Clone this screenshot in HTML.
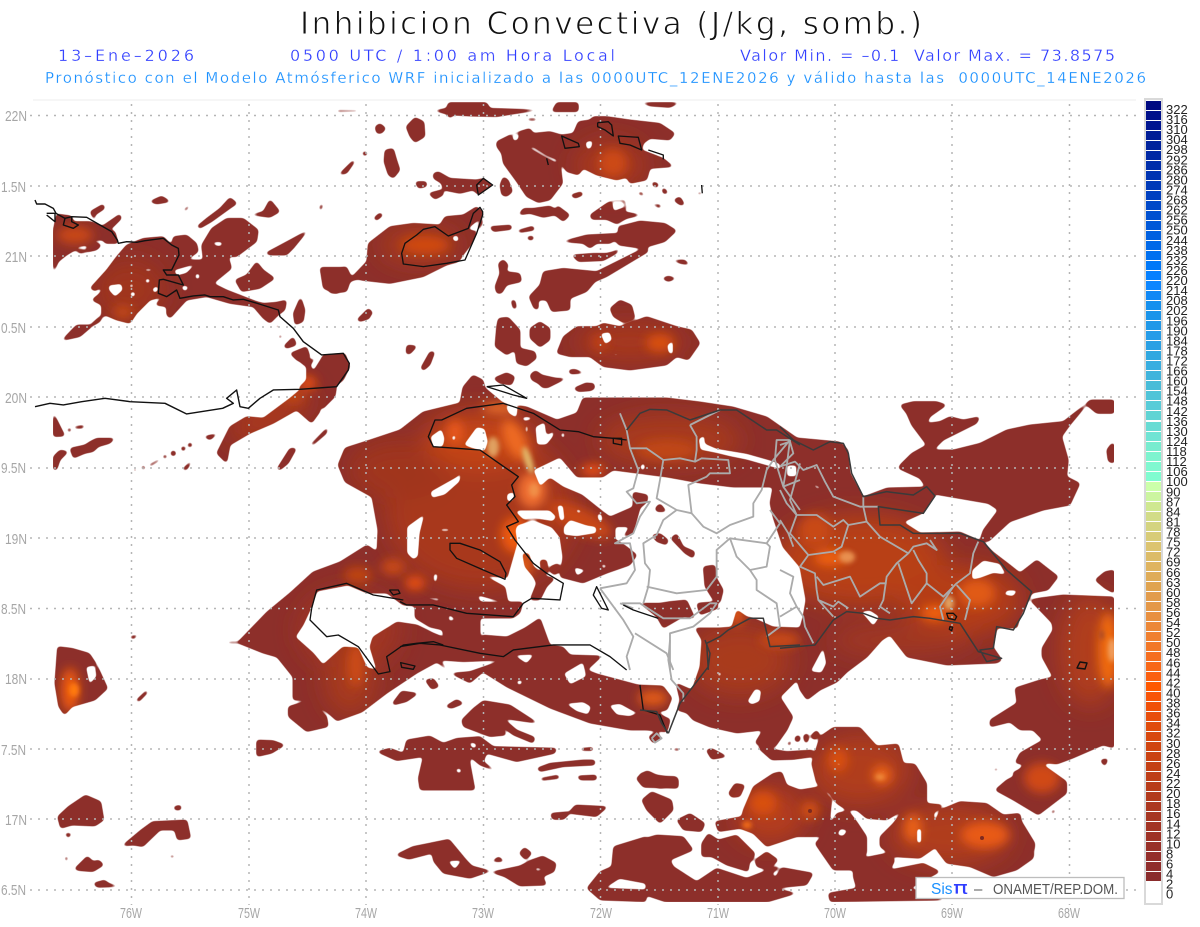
<!DOCTYPE html>
<html lang="es"><head><meta charset="utf-8"><title>Inhibicion Convectiva</title>
<style>
html,body{margin:0;padding:0;background:#fff;width:1200px;height:927px;overflow:hidden}
svg{position:absolute;left:0;top:0}
#cb{position:absolute;left:1144px;top:98px;width:15px;height:803px;border:2px solid #d9d9d9;background:#fff;padding:0}
#cb div{position:absolute;left:0;top:0;width:15px;padding-top:1px}
#cb i{display:block;height:9px;margin-bottom:1.03px}
text{font-family:"Liberation Sans",sans-serif}
text.dv{font-family:"DejaVu Sans","Liberation Sans",sans-serif}
</style></head><body>
<svg width="1200" height="927" viewBox="0 0 1200 927" xmlns="http://www.w3.org/2000/svg">
<defs>
<filter id="b1" x="-50%" y="-50%" width="200%" height="200%"><feGaussianBlur stdDeviation="12"/></filter>
<filter id="b2" x="-50%" y="-50%" width="200%" height="200%"><feGaussianBlur stdDeviation="5"/></filter>
<filter id="b3" x="-50%" y="-50%" width="200%" height="200%"><feGaussianBlur stdDeviation="2.5"/></filter>
<filter id="sm" filterUnits="userSpaceOnUse" x="0" y="0" width="1200" height="927" color-interpolation-filters="sRGB">
<feGaussianBlur stdDeviation="1.8"/>
<feComponentTransfer><feFuncR type="linear" slope="5" intercept="-1.5"/><feFuncG type="linear" slope="5" intercept="-1.5"/><feFuncB type="linear" slope="5" intercept="-1.5"/></feComponentTransfer>
</filter>
<mask id="m" maskUnits="userSpaceOnUse" x="53" y="102" width="1061" height="800">
<g filter="url(#sm)">
<rect x="0" y="0" width="1200" height="927" fill="#000"/>
<polygon fill="#fff" points="238,642 267,612 290,593 313,572 340,562 367,545 377,552 378,530 372,497 345,482 338,465 345,448 370,440 400,430 423,412 460,403 463,387 473,375 483,380 485,388 503,403 527,407 557,420 577,413 583,398 617,398 667,398 700,402 733,407 767,417 797,438 840,442 848,450 850,473 863,497 887,488 927,487 935,495 923,513 903,522 920,533 960,532 983,542 993,552 1010,565 1020,573 1037,560 1058,577 1048,590 1032,593 1020,617 1017,628 997,628 993,647 1002,660 997,663 947,665 907,657 890,635 882,640 867,657 847,672 837,682 820,690 807,700 800,690 797,680 780,697 793,717 787,730 775,747 763,747 755,743 763,730 737,733 710,727 693,720 687,713 677,710 680,700 676,683 692,690 700,667 702,640 695,628 720,628 732,627 737,610 747,617 753,618 773,627 800,628 803,617 806,600 800,567 783,547 773,517 770,503 773,487 733,487 700,483 667,477 613,470 603,477 577,477 560,457 533,470 540,487 550,478 563,487 582,495 597,507 610,517 633,507 633,492 648,495 647,502 640,508 633,533 617,540 627,547 637,555 630,565 607,573 583,583 560,577 563,557 560,537 552,527 533,520 517,525 515,530 517,543 507,578 483,575 505,587 508,603 478,595 480,602 523,602 520,613 513,618 480,618 480,643 463,643 443,635 443,630 430,627 415,618 415,606 403,605 387,593 367,593 348,585 317,591 310,610 303,625 295,637 313,653 323,665 343,647 358,648 367,668 377,670 370,647 373,637 397,622 417,625 433,633 443,637 480,643 482,635 507,637 525,628 540,618 548,640 550,645 563,647 570,655 602,656 587,670 597,674 638,685 663,686 672,698 667,710 657,712 670,720 667,732 647,730 630,730 590,723 550,708 507,687 483,672 470,683 450,673 437,662 417,673 387,693 362,712 337,721 327,712 308,700 293,700 293,677 277,657 263,653 238,643"/>
<g transform="translate(400 370) scale(.3333)">
<g fill="#000">
<polygon points="90,200 125,175 135,205 130,230 100,235"/><polygon points="190,225 230,170 255,175 265,215 255,245 215,235"/><polygon points="155,195 170,195 165,215 155,212"/><polygon points="315,105 355,110 350,145 325,130"/><polygon points="365,140 395,140 395,150 370,155"/><polygon points="375,165 385,165 385,190 375,190"/><polygon points="405,170 435,155 440,195 465,180 460,200 440,225 410,225"/><polygon points="480,190 495,185 495,205 485,205"/><polygon points="730,275 738,292 728,305 718,292"/><polygon points="90,365 170,320 185,305 180,335 135,375 95,385"/><polygon points="20,470 75,430 60,490 55,560 40,570 20,550"/><polygon points="120,475 150,475 150,485 120,485"/><polygon points="895,205 915,195 915,220 950,235 1040,250 1110,270 1140,280 1145,300 1110,290 1040,270 990,260 950,250 900,240"/><polygon points="1160,290 1190,285 1190,320 1165,320"/><polygon points="355,420 450,420 470,440 460,455 400,445 370,450 345,425"/><polygon points="470,405 490,405 495,450 480,455"/><polygon points="525,415 545,420 545,430 530,430"/><polygon points="490,470 510,448 560,465 590,470 590,490 530,500 490,495"/><polygon points="590,430 605,430 610,455 595,455"/><polygon points="645,470 690,470 660,515 645,510"/><polygon points="600,580 625,585 610,600"/><polygon points="520,590 560,600 530,620"/>
<polygon points="320,370 345,365 340,395 320,395"/>
</g>
<g fill="#fff">
<polygon points="368,550 385,550 400,590 440,620 465,625 440,650 420,690 390,690 410,640 400,620 375,590"/><polygon points="420,570 440,570 445,610 425,610"/><polygon points="450,590 475,580 483,600 465,615 450,605"/><polygon points="765,415 780,400 800,425 770,425"/><polygon points="755,495 780,490 805,510 800,525 770,515"/><polygon points="812,505 830,490 850,530 885,545 880,565 855,550"/><polygon points="730,700 780,700 810,695 860,690 885,745 850,740 790,775 770,740 720,700"/><polygon points="890,700 950,695 955,715 900,735"/><polygon points="910,590 945,585 950,625 970,660 960,700 940,690 915,650"/>
<polygon points="280,25 320,8 345,20 335,45 300,40"/><polygon points="390,15 410,3 425,15 470,25 430,55 415,40 395,30"/><polygon points="520,55 560,38 585,45 575,62 535,65"/>
</g>
</g>
<g transform="translate(230 530) scale(.3333)" fill="#000">
<polygon points="610,130 625,130 620,160 610,155"/><polygon points="590,200 635,205 625,215 585,205"/><polygon points="1000,430 1060,395 1070,440 1020,465"/><polygon points="860,450 880,450 875,465 860,465"/><polygon points="900,460 930,460 930,465 900,465"/><polygon points="950,470 965,490 945,480"/><polygon points="1005,520 1060,515 1085,530 1075,555 1040,545"/><polygon points="1135,525 1170,520 1215,545 1235,545 1200,560 1160,555"/><polygon points="850,375 915,372 890,402"/><polygon points="630,390 700,395 820,390 720,425 660,430"/><polygon points="655,250 680,270 655,275"/><polygon points="480,298 505,298 505,305 480,305"/><polygon points="450,345 465,345 465,350 450,350"/><polygon points="740,195 830,220 750,215"/>
</g>
<g transform="translate(780 400) scale(.3333)" fill="#000">
<polygon points="20,195 50,195 50,230 20,230"/><polygon points="90,245 130,265 110,268"/><polygon points="445,530 470,520 460,535"/><polygon points="575,510 610,480 660,490 680,525 640,520 600,535 575,540"/><polygon points="510,560 540,545 535,555 510,570"/><polygon points="680,570 715,570 700,590 670,585"/><polygon points="240,635 270,630 300,650 280,680 255,650"/><polygon points="90,815 130,740 140,790 125,820"/><polygon points="300,425 320,425 320,435"/><polygon points="465,440 480,445 480,455 465,450"/>
</g>
<g transform="translate(640 640) scale(.3333)" fill="#000">
<polygon points="320,185 345,145 365,150 360,185 335,195"/><polygon points="232,95 245,95 245,110 232,110"/>
</g>
<g transform="translate(780 400) scale(.3333)" fill="#fff">
<polygon points="355,205 360,195 395,160 440,135 395,75 380,40 360,15 400,5 470,5 500,15 450,50 440,70 480,65 510,50 550,60 600,50 590,70 530,100 490,120 460,150 520,150 600,130 680,90 750,75 850,65 920,10 930,0 1003,0 1003,40 950,40 920,15 870,75 845,110 865,180 860,230 900,250 870,315 790,330 690,365 625,425 600,420 610,390 655,330 625,310 450,280 420,235"/>
<polygon points="980,150 995,130 1003,130 1003,190 985,185"/>
<polygon points="945,540 975,515 1003,510 1003,580 975,565"/>
<polygon points="720,520 770,480 835,530 800,570 750,575 740,550"/>
<polygon points="850,500 858,500 858,505 850,505"/>
</g>
<polygon fill="#fff" points="1030,600 1040,598 1063,595 1114,597 1114,748 1103,745 1073,758 1057,764 1047,763 1018,778 1012,773 1028,765 1015,763 1020,753 1043,740 1033,730 1020,730 1010,722 990,727 990,720 1017,703 1015,688 1040,680 1053,677 1042,657 1042,648 1053,630 1052,623"/>
<g transform="translate(640 640) scale(.3333)" fill="#fff">
<polygon points="515,370 540,290 580,262 660,262 710,318 775,312 790,370 825,372 860,430 860,490 790,510 740,540 680,535 650,510 620,510 590,490 570,460 530,430"/>
<polygon points="310,510 340,440 400,400 425,395 440,435 480,450 540,440 575,480 570,530 575,580 530,590 470,590 380,620 340,580 300,565 235,575 225,545 305,530"/>
<polygon points="525,610 560,575 590,520 625,512 650,545 680,590 680,640 665,660 640,690 580,690 545,640"/>
<polygon points="640,690 665,655 690,650 740,640 765,660 750,690 850,670 900,695 810,745 920,780 570,785 565,760 650,745 640,710"/>
<polygon points="720,590 760,550 790,510 860,490 910,495 880,520 890,620 840,655 760,650 720,620"/>
<polygon points="880,560 900,510 960,485 1040,490 1090,525 1140,520 1145,545 1185,610 1180,655 1130,690 1060,710 990,680 920,670 890,630"/>
<polygon points="1065,450 1100,420 1120,410 1150,375 1210,375 1280,425 1280,460 1195,525 1120,480"/>
<polygon points="1235,510 1250,510 1235,525"/><polygon points="1380,360 1405,355 1395,380"/><polygon points="1060,385 1080,385 1065,395"/><polygon points="1088,345 1095,345 1095,355"/>
<polygon points="265,460 285,430 315,435 300,470 275,472"/>
<polygon points="0,400 30,395 50,408 110,410 110,440 60,445 0,432"/>
<polygon points="5,480 35,455 95,480 100,510 60,550 20,510"/>
<polygon points="110,540 150,520 195,550 185,575 130,570"/>
<polygon points="0,600 50,585 130,590 160,630 90,660 100,680 170,725 230,685 320,715 410,680 520,700 500,735 400,745 470,760 385,785 75,785 0,760"/>
<polygon points="185,610 205,580 235,600 290,585 345,640 325,695 260,675 215,650 185,650"/>
<polygon points="345,660 380,635 415,660 385,690 350,680"/>
<polygon points="440,310 455,300 450,320"/><polygon points="465,290 480,285 480,305 465,305"/><polygon points="490,285 505,280 505,305 495,310"/><polygon points="510,290 530,270 540,285 525,300"/>
<polygon points="350,320 440,335 520,330 520,350 460,358 395,360"/>
<polygon points="198,330 215,325 262,350 215,358"/>
<polygon points="90,375 120,375 120,378 90,378"/><polygon points="100,325 120,325 120,332 100,332"/><polygon points="25,290 50,275 65,295 40,310"/>
<polygon points="20,230 90,235 85,262 25,270 0,265 0,232"/>
</g>
<g transform="translate(640 640) scale(.3333)" fill="#000">
<polygon points="830,565 845,565 845,610 830,610"/><polygon points="1045,515 1075,530 1050,530"/><polygon points="600,565 625,570 610,590 590,585"/><polygon points="330,660 355,690 325,690"/><polygon points="585,365 620,375 590,378"/><polygon points="718,395 735,385 735,402"/><polygon points="1150,630 1180,630 1170,640"/>
<polygon points="395,700 430,675 405,715"/>
</g>
<g transform="translate(330 100) scale(.3333)">
<g fill="#fff">
<polygon points="355,8 470,8 480,25 635,30 560,40 500,50 420,48 370,45 360,55 350,42 310,32 350,25"/><polygon points="680,8 745,8 745,35 665,35"/><polygon points="930,8 1050,8 1020,22 960,18"/><polygon points="20,30 85,30 85,35 20,36"/><polygon points="95,42 110,42 110,47 95,47"/><polygon points="590,55 620,55 620,62 595,62"/>
<polygon points="500,125 550,100 600,85 610,100 660,95 695,105 730,100 745,65 780,60 790,50 830,50 900,60 990,70 1035,100 1020,120 960,115 940,130 935,150 1000,175 1030,200 960,205 950,240 900,250 890,232 860,240 800,225 760,205 745,225 710,215 690,185 698,250 660,300 625,308 590,290 560,245 520,190 515,160 500,140"/>
<polygon points="135,80 150,70 168,85 155,100 140,100"/><polygon points="228,80 255,52 282,65 285,110 255,128 240,110"/><polygon points="97,155 110,155 113,165 100,168"/><polygon points="165,150 190,145 200,180 210,210 190,235 175,225 162,185"/><polygon points="25,225 70,180 75,185 50,220"/>
<polygon points="310,220 325,215 360,235 440,240 460,235 488,255 445,285 430,270 390,280 340,270 335,250 310,235"/><polygon points="255,245 290,245 290,260 265,265"/><polygon points="295,280 340,268 340,285 315,298"/><polygon points="510,255 520,230 535,240 548,275 530,290 515,285"/>
<polygon points="115,430 180,380 250,370 330,375 345,350 400,345 440,320 458,335 458,370 440,400 405,480 350,495 280,530 180,550 90,540 110,490"/><polygon points="0,508 50,500 60,535 85,535 60,545 50,575 0,580"/><polygon points="80,660 115,625 130,640 100,660"/><polygon points="130,355 150,338 160,345 140,362"/>
<polygon points="505,490 520,478 535,495 528,515 570,520 575,545 530,555 515,580 500,580 495,560 510,520"/><polygon points="478,380 545,375 545,388 490,395"/><polygon points="565,345 580,325 610,325 660,318 680,330 680,315 720,345 700,365 675,345 640,352 600,340"/><polygon points="560,392 610,378 615,390 570,398"/><polygon points="590,410 612,408 610,420 595,420"/><polygon points="720,285 755,275 760,285 735,295"/>
<polygon points="865,380 930,363 1005,370 1040,392 1005,425 935,445 865,435"/><polygon points="695,425 770,405 865,400 865,430 800,430 780,445 760,430"/><polygon points="725,465 790,460 830,460 850,455 870,445 860,460 820,482 745,485"/>
<polygon points="780,345 830,310 850,300 885,300 890,325 880,335 935,345 890,355 860,372 830,358 785,358"/>
<polygon points="640,515 700,505 800,515 870,480 950,440 955,455 880,500 830,530 795,545 770,575 720,595 720,630 665,635 650,600 625,600 625,630 612,625 597,590 630,555"/>
<polygon points="1025,480 1065,480 1080,495 1050,490"/><polygon points="995,535 1015,528 1040,535 1015,545"/><polygon points="543,600 555,600 560,625 550,628"/><polygon points="840,625 870,600 905,615 915,655 880,668 850,650"/>
<polygon points="505,655 535,652 570,690 570,745 615,755 620,775 590,798 560,790 555,750 530,765 495,740 500,680"/><polygon points="600,685 630,665 660,685 660,720 630,742 600,715"/>
<polygon points="680,760 700,710 740,680 800,680 820,670 870,680 950,650 1040,680 1085,690 1110,730 1075,780 1040,770 1010,795 900,810 820,800 780,770 720,770"/>
<polygon points="230,735 262,738 240,762 228,762"/><polygon points="272,805 300,755 315,755 300,795 280,812"/><polygon points="600,825 615,812 630,825 650,835 710,835 650,865 630,850"/><polygon points="715,810 735,808 765,820 720,822"/><polygon points="730,868 790,848 795,868"/>
<polygon points="995,265 1005,265 1015,280 1000,282"/><polygon points="965,245 985,250 985,262 970,260"/><polygon points="920,280 935,275 945,290"/><polygon points="960,310 995,315 990,325"/><polygon points="1030,300 1050,290 1065,315 1050,315"/><polygon points="1095,280 1115,275 1115,285"/><polygon points="785,265 810,265 800,272"/><polygon points="762,310 778,308 775,316"/><polygon points="1080,320 1092,320 1088,328"/><polygon points="1085,355 1100,370 1095,375"/><polygon points="360,310 368,310 364,316"/>
</g>
<g fill="#000">
<polygon points="590,140 610,140 650,165 685,180 680,190 640,170"/><polygon points="545,105 570,100 565,120 550,125"/><polygon points="765,125 790,120 785,145 770,150"/><polygon points="845,305 880,305 885,322 850,335"/><polygon points="810,700 840,695 848,720 825,735"/><polygon points="1010,735 1030,720 1030,765 1015,760"/><polygon points="425,375 450,355 440,395 412,388"/><polygon points="455,345 458,350 405,478 385,485 420,435 440,400"/><polygon points="365,408 385,405 388,425 370,425"/><polygon points="885,740 905,740 905,745 885,745"/><polygon points="845,760 870,760 870,768 845,768"/><polygon points="615,243 628,243 628,248 615,248"/><polygon points="845,425 862,422 850,445 842,440"/><polygon points="295,422 315,422 315,427 295,427"/><polygon points="345,467 370,467 370,471 345,471"/>
</g>
</g>
<g transform="translate(30 190) scale(.3333)">
<g fill="#fff">
<polygon points="70,120 80,72 125,78 130,95 180,95 210,105 255,125 265,160 225,160 220,150 180,150 215,165 200,180 150,190 135,180 110,195 85,215 70,250"/><polygon points="180,65 220,42 225,55 195,75 195,95"/><polygon points="215,110 270,72 275,85 245,115"/>
<polygon points="290,165 340,145 400,140 425,165 430,140 470,135 500,160 505,185 470,210 520,210 515,165 545,115 590,85 640,85 685,120 680,155 620,200 595,200 605,235 550,280 590,300 680,335 700,340 770,335 740,370 745,375 710,360 720,400 700,385 670,350 600,340 530,320 470,330 420,385 410,375 410,350 375,345 400,320 360,330 320,370 300,400 260,390 225,375 215,385 210,395 185,410 150,440 95,452 125,420 140,405 180,405 215,375 215,345 185,330 210,310 180,295 230,240 260,200"/>
<polygon points="790,370 812,320 825,360 820,395 795,405"/><polygon points="705,345 770,330 765,360 745,375 720,400 705,370"/>
<polygon points="815,490 840,510 880,495 945,490 960,530 940,570 915,590 830,600 805,595 830,570 830,530 815,520"/><polygon points="780,490 830,470 840,500 820,520 800,510"/><polygon points="760,470 790,440 800,465 770,475"/><polygon points="735,405 748,405 745,418"/><polygon points="725,445 735,445 730,452"/><polygon points="745,435 758,435 750,450"/>
<polygon points="560,790 600,710 650,680 700,685 780,625 810,600 920,590 915,620 870,665 845,700 800,660 730,700 660,730 600,765 590,820 555,785"/>
<polygon points="520,740 565,730 540,750"/>
<circle cx="480" cy="765" r="7"/><circle cx="460" cy="776" r="7"/><circle cx="430" cy="790" r="8"/><circle cx="405" cy="800" r="6"/><polygon points="355,825 395,803 385,815 360,830"/><circle cx="340" cy="833" r="6"/><circle cx="315" cy="840" r="5"/>
<polygon points="358,35 395,18 422,35 380,42"/><polygon points="460,60 480,42 475,55 465,65"/><polygon points="500,110 530,85 570,55 600,22 622,40 600,55 545,95 510,115"/><polygon points="660,75 700,65 720,28 750,65 720,82 690,78"/><polygon points="615,270 650,255 680,215 700,240 735,265 690,295 635,305"/><polygon points="705,190 780,150 835,120 790,175 770,195 720,195"/><polygon points="870,232 950,232 965,262 1015,210 1020,265 965,270 920,312 880,295"/><polygon points="980,390 1020,355 1020,385 990,395"/>
<polygon points="70,668 105,738 70,740"/><polygon points="130,710 165,705 160,715 135,716"/><circle cx="118" cy="720" r="6"/><polygon points="120,775 165,765 180,755 200,745 255,745 240,760 205,770 190,785 165,790 130,805"/><polygon points="70,800 90,780 115,785 90,810 80,840 70,840"/><polygon points="840,765 895,710 890,730 850,765"/><polygon points="740,838 780,775 800,775 775,820 750,840"/><polygon points="455,840 485,810 480,825 470,840"/><polygon points="870,45 880,40 875,60 868,62"/>
</g>
<g fill="#000">
<polygon points="140,170 175,165 170,180 140,178"/><polygon points="400,200 410,200 385,225 378,222"/><polygon points="430,240 500,220 470,250 440,258"/><polygon points="545,155 580,155 575,170 555,168"/><polygon points="300,218 312,218 310,232 300,232"/><polygon points="340,235 370,235 365,245 345,245"/><polygon points="298,280 312,280 310,295 298,295"/><polygon points="345,265 362,265 360,280 345,280"/><polygon points="235,285 275,280 280,300 255,322 235,300"/><polygon points="300,305 318,305 315,322 300,320"/><polygon points="495,250 510,250 510,268 495,268"/><polygon points="365,295 385,285 385,305 370,310"/><polygon points="930,505 945,525 935,530"/><polygon points="905,560 915,575 905,575"/><polygon points="880,497 850,545 840,525 860,500"/><polygon points="870,650 875,650 875,665 870,665"/><polygon points="455,285 478,288 470,305 455,300"/><polygon points="205,295 220,298 205,312 195,305"/>
</g>
</g>
<g transform="translate(30 620) scale(.3827 .3333)">
<g fill="#fff">
<polygon points="72,80 110,85 155,100 175,135 203,205 170,240 110,260 90,285 75,260 65,190"/><polygon points="258,50 285,43 270,58"/><polygon points="275,243 305,210 308,218 285,245"/><polygon points="72,590 100,560 145,525 185,545 193,600 170,618 110,615 80,625"/><polygon points="90,640 110,640 100,655"/><polygon points="240,678 290,630 320,605 410,600 420,655 385,660 378,630 340,630 295,680 270,675"/><polygon points="375,560 395,555 395,570 378,570"/><polygon points="335,665 345,660 345,670"/><polygon points="355,660 365,665 355,668"/><polygon points="90,710 100,710 95,730"/><polygon points="115,748 150,708 165,725 180,720 193,735 165,755 130,752"/><polygon points="165,790 195,780 205,790 235,800 175,802"/><polygon points="130,790 140,788 140,800"/><polygon points="225,272 235,272 235,276 225,276"/><polygon points="365,706 378,706 378,713 365,713"/><polygon points="212,720 220,720 220,726 212,726"/><polygon points="860,318 878,318 870,323"/><polygon points="515,65 545,65 545,70 515,70"/>
<polygon points="955,705 1000,680 1095,658 1140,720 1155,738 1210,755 1280,738 1310,720 1340,708 1375,730 1370,755 1340,770 1350,795 1280,798 1240,770 1200,755 1150,775 1080,760 1055,725 1050,700 990,718"/><polygon points="1205,725 1225,710 1240,725"/><polygon points="1278,700 1292,682 1312,700 1295,720"/><polygon points="1360,580 1410,575 1425,555 1510,560 1480,590 1410,580 1395,598 1365,598"/><polygon points="1455,805 1490,755 1520,740 1525,680 1610,650 1610,845 1490,840"/><polygon points="1390,525 1410,525 1400,530"/>
</g>
<g fill="#000">
<polygon points="145,140 170,135 175,170 155,195"/><polygon points="100,195 106,195 106,208 100,208"/><polygon points="1090,722 1130,720 1110,750"/><polygon points="1320,740 1350,750 1320,755"/><polygon points="1500,805 1540,775 1610,790 1610,810"/>
</g>
</g>
<g transform="translate(230 530) scale(.3333)" fill="#fff">
<polygon points="175,530 240,510 290,560 295,590 230,605 175,560"/><polygon points="80,630 130,632 165,645 125,670 80,680"/><polygon points="45,265 55,265 55,272 45,272"/><polygon points="0,335 25,335 25,340 0,340"/><polygon points="585,450 610,445 628,470 605,478"/><polygon points="487,520 515,483 565,490 530,515 490,525"/><polygon points="645,530 680,508 702,520 665,535"/>
<polygon points="695,570 730,535 760,512 840,525 925,580 820,565 860,600 915,622 910,640 850,615 810,585 830,615 780,620 700,590"/>
<polygon points="440,665 480,655 520,670 530,630 600,618 640,640 680,625 750,620 790,650 980,655 975,670 860,695 770,670 760,695 800,725 750,705 720,680 720,700 735,780 570,780 565,745 580,680 500,692"/>
<polygon points="920,715 960,700 1060,690 1095,690 1095,705 1000,710 930,725"/><polygon points="930,745 985,735 990,745 935,752"/><polygon points="1040,738 1100,735 1100,750 1050,750"/><polygon points="1218,745 1250,722 1280,735 1345,745 1345,775 1240,772"/><polygon points="1050,655 1090,652 1090,662 1055,662"/><polygon points="1320,705 1350,705 1350,708"/>
</g>
<g transform="translate(230 530) scale(.3333)" fill="#000"><polygon points="715,635 740,640 740,655 725,655"/><polygon points="675,715 695,715 695,730 680,730"/></g>
</g>
</mask>
</defs>

<line x1="33" y1="100" x2="1136" y2="100" stroke="#eee" stroke-width="1"/>

<!-- data field -->
<g mask="url(#m)">
<rect x="50" y="100" width="1070" height="805" fill="#8d2f2a"/>
<g filter="url(#b1)">
<ellipse cx="480" cy="510" rx="95" ry="80" fill="#a8391c"/>
<ellipse cx="400" cy="470" rx="50" ry="30" fill="#a0361f"/>
<ellipse cx="480" cy="440" rx="55" ry="28" fill="#c44414"/>
<ellipse cx="670" cy="440" rx="70" ry="25" fill="#a93a1c"/>
<ellipse cx="860" cy="560" rx="85" ry="45" fill="#b83f17"/>
<ellipse cx="960" cy="600" rx="60" ry="35" fill="#b53e18"/>
<ellipse cx="740" cy="660" rx="50" ry="35" fill="#a93b1d"/>
<ellipse cx="900" cy="640" rx="70" ry="15" fill="#a23820"/>
<ellipse cx="350" cy="630" rx="50" ry="40" fill="#a03620"/>
<ellipse cx="350" cy="680" rx="25" ry="35" fill="#a83a1c"/>
<ellipse cx="860" cy="770" rx="50" ry="35" fill="#b03c1a"/>
<ellipse cx="770" cy="815" rx="35" ry="28" fill="#b53e1a"/>
<ellipse cx="950" cy="835" rx="60" ry="30" fill="#b03c1a"/>
<ellipse cx="1090" cy="650" rx="30" ry="55" fill="#b03c1a"/>
<ellipse cx="420" cy="245" rx="40" ry="18" fill="#a83a1c"/>
<ellipse cx="610" cy="165" rx="35" ry="25" fill="#a8391c"/>
<ellipse cx="630" cy="342" rx="55" ry="18" fill="#a8391c"/>
<ellipse cx="130" cy="290" rx="35" ry="30" fill="#a0361f"/>
<ellipse cx="270" cy="415" rx="45" ry="20" fill="#a8391c" transform="rotate(-30 270 415)"/>
</g>
<g filter="url(#b2)">
<ellipse cx="500" cy="408" rx="18" ry="5" fill="#ee7026"/>
<ellipse cx="455" cy="432" rx="8" ry="12" fill="#e8581a"/>
<ellipse cx="515" cy="440" rx="10" ry="22" fill="#ee6a20" transform="rotate(-25 515 440)"/>
<ellipse cx="532" cy="490" rx="14" ry="18" fill="#f07030"/>
<ellipse cx="515" cy="535" rx="14" ry="18" fill="#ee5a0e"/>
<ellipse cx="415" cy="583" rx="10" ry="7" fill="#e85010"/>
<ellipse cx="393" cy="567" rx="12" ry="8" fill="#c84a14"/>
<ellipse cx="358" cy="575" rx="14" ry="8" fill="#c04410"/>
<ellipse cx="356" cy="665" rx="8" ry="22" fill="#cc4c14"/>
<ellipse cx="653" cy="698" rx="15" ry="8" fill="#e05a14"/>
<ellipse cx="525" cy="565" rx="6" ry="12" fill="#e86018"/>
<ellipse cx="593" cy="470" rx="12" ry="6" fill="#e85010"/>
<ellipse cx="580" cy="520" rx="35" ry="12" fill="#c84614" transform="rotate(25 580 520)"/>
<ellipse cx="667" cy="450" rx="30" ry="10" fill="#c04614"/>
<ellipse cx="737" cy="615" rx="6" ry="10" fill="#ea5a10"/>
<ellipse cx="780" cy="640" rx="20" ry="8" fill="#c84a14"/>
<ellipse cx="655" cy="640" rx="20" ry="8" fill="#c04414"/>
<ellipse cx="830" cy="558" rx="16" ry="8" fill="#ee6010"/>
<ellipse cx="815" cy="530" rx="16" ry="16" fill="#c84a14"/>
<ellipse cx="935" cy="613" rx="14" ry="8" fill="#f06010"/>
<ellipse cx="977" cy="593" rx="18" ry="14" fill="#e05a14"/>
<ellipse cx="1108" cy="650" rx="10" ry="38" fill="#f06a10"/>
<ellipse cx="70" cy="690" rx="9" ry="22" fill="#ec5a10"/>
<ellipse cx="75" cy="235" rx="18" ry="9" fill="#c84614"/>
<ellipse cx="425" cy="245" rx="24" ry="9" fill="#d04a10"/>
<ellipse cx="613" cy="163" rx="14" ry="14" fill="#cc4a12"/>
<ellipse cx="660" cy="343" rx="14" ry="9" fill="#d85010"/>
<ellipse cx="600" cy="342" rx="8" ry="8" fill="#c04014"/>
<ellipse cx="308" cy="383" rx="8" ry="7" fill="#e85010"/>
<ellipse cx="293" cy="397" rx="12" ry="6" fill="#c04614"/>
<ellipse cx="123" cy="312" rx="10" ry="7" fill="#c04614"/>
<ellipse cx="838" cy="760" rx="10" ry="12" fill="#d85010"/>
<ellipse cx="882" cy="775" rx="10" ry="10" fill="#e86018"/>
<ellipse cx="763" cy="803" rx="14" ry="12" fill="#d85010"/>
<ellipse cx="810" cy="810" rx="9" ry="9" fill="#d25010"/>
<ellipse cx="913" cy="828" rx="9" ry="14" fill="#e86018"/>
<ellipse cx="985" cy="835" rx="24" ry="13" fill="#e85a14"/>
<ellipse cx="1042" cy="778" rx="18" ry="15" fill="#d04a14"/>
</g>
<g filter="url(#b3)">
<ellipse cx="493" cy="447" rx="6" ry="10" fill="#e0a060"/>
<ellipse cx="528" cy="460" rx="4" ry="14" fill="#e0b468" transform="rotate(-18 528 460)"/>
<ellipse cx="534" cy="490" rx="5" ry="7" fill="#f09048"/>
<ellipse cx="847" cy="557" rx="8" ry="6" fill="#e89050"/>
<ellipse cx="949" cy="603" rx="5" ry="7" fill="#e0a060"/>
<ellipse cx="1112" cy="650" rx="4" ry="12" fill="#f0a060"/>
<ellipse cx="74" cy="690" rx="5" ry="7" fill="#ff7a10"/>
<ellipse cx="747" cy="825" rx="5" ry="4" fill="#f06a14"/>
<ellipse cx="880" cy="777" rx="5" ry="3" fill="#f09040"/>
<ellipse cx="1102" cy="635" rx="1.5" ry="5" fill="#8d4030"/>
</g>
<circle cx="810" cy="811" r="2" fill="#7d2a20"/>
<circle cx="982" cy="838" r="2" fill="#7d2a20"/>
</g>

<!-- grid -->
<g stroke="#b5b5b5" stroke-width="1.5" stroke-dasharray="2 6" fill="none">
<path d="M30 115.5H1136M30 186H1136M30 256H1136M30 327H1136M30 397H1136M30 468H1136M30 538H1136M30 608.5H1136M30 679H1136M30 749H1136M30 819H1136M30 890H1136"/>
<path d="M131.5 104V905M249 104V905M366 104V905M483.5 104V905M600.5 104V905M718 104V905M835 104V905M952 104V905M1069.5 104V905"/>
</g>

<!-- gray province borders -->
<g fill="none" stroke="#ababab" stroke-width="1.9" stroke-linejoin="round">
<g transform="translate(400 370) scale(.3333)" stroke-width="5.5">
<polyline points="660,130 680,180 690,235 715,300 700,355 680,365 710,400 750,395 720,440 700,490 645,520 690,520 700,570 705,600 680,640 600,655"/>
<polyline points="690,235 740,235 790,270 840,265 885,275 890,240 890,200 870,165"/>
<polyline points="790,270 780,330 770,385 830,420 875,430 865,345 920,320 930,310 990,310 985,270 905,265 885,275"/>
<polyline points="875,430 910,470 950,490 990,465 1060,440 1060,400 1085,360 1100,300 1120,270 1170,210 1130,210 1125,270 1150,350 1200,420"/>
<polyline points="830,420 790,450 770,495 730,520 735,580 750,600 745,650 730,700"/>
<polyline points="740,650 830,670 920,660 950,620 950,540 990,505 1010,560 1050,600 1070,630 1070,660 1130,700 1140,770 1100,800"/>
<polyline points="990,505 1100,520 1140,460 1110,420"/><polyline points="1050,600 1100,590 1110,530 1100,520"/>
<polyline points="665,700 720,700 790,745 870,745 930,700 950,700 930,730 880,770 810,790 810,900"/>
<polyline points="705,790 800,850 820,900"/>
<polyline points="600,655 670,750 700,800 680,860 690,900"/>
<polyline points="660,700 700,715"/><polyline points="870,165 960,120"/><polyline points="1150,350 1200,330"/>
<polyline points="1170,210 1160,290 1150,350"/>
</g>
<g transform="translate(780 400) scale(.3333)" stroke-width="5.5">
<polyline points="0,135 30,125 40,160 0,200"/>
<polyline points="0,200 45,185 70,210 110,195 135,245 160,290 240,320 295,320"/>
<polyline points="60,190 30,300 50,345 110,345 160,380 190,360 205,375 260,365 300,410 385,460 350,490 320,530 310,600 300,620 330,640"/>
<polyline points="205,375 185,440 160,455 85,465 60,500 105,520 110,570 115,600 160,650"/>
<polyline points="50,345 30,400 85,465"/>
<polyline points="0,270 20,310 50,345"/>
<polyline points="385,460 400,440 440,430 470,450 450,420"/>
<polyline points="400,450 415,480 440,520 440,550 395,610 355,490"/>
<polyline points="440,550 490,590 530,550 570,520 580,460 595,425"/>
<polyline points="530,555 570,600 555,660"/>
<polyline points="520,560 480,620 490,660"/>
<polyline points="110,530 130,555 210,530 240,590 300,550 320,550"/>
<polyline points="115,600 160,620 175,605 205,625"/>
<polyline points="250,290 250,320 260,365"/>
<polyline points="0,510 40,530 30,580 50,620 70,650 75,680 100,730"/>
<polyline points="0,360 25,400 40,440"/><polyline points="0,650 50,620"/>
</g>
<g transform="translate(640 640) scale(.3333)" stroke-width="5.5">
<polyline points="90,0 85,60 95,120 130,160 130,185"/>
<polyline points="35,295 50,280 65,295 45,308 35,295"/>
</g>
</g>

<!-- coast lines -->
<g fill="none" stroke="#111" stroke-width="1.3" stroke-linejoin="round">
<g transform="translate(30 190) scale(.3333)" stroke-width="4.2">
<polyline points="15,30 20,42 45,42 70,55 78,70 105,85 125,80 170,82 210,105 245,125 262,150 265,160 290,155 320,157 345,152 400,145 425,165 445,175 447,195 425,240 400,240 410,255 445,255 460,285 400,268 388,270 385,310 410,320 440,300 450,325 490,318 525,315 540,320 555,320 580,320 610,330 640,328 675,338 745,360 750,380 790,415 820,455 875,495 940,490 958,520 955,540 920,590 810,598 730,600 690,625 655,655 630,650 620,600 590,625 610,640 578,655 470,672 405,640 300,635 225,625 155,635 100,645 60,640 15,650"/>
<polyline points="50,70 75,70 75,95 50,75"/>
<polyline points="105,85 100,105 130,115 145,105 125,95 125,80"/>
</g>
<g transform="translate(330 100) scale(.3333)" stroke-width="4">
<polygon points="215,460 225,430 260,405 280,388 315,380 355,408 415,385 430,340 450,322 458,335 458,345 440,400 405,480 350,490 280,500 220,492"/>
<polygon points="440,255 460,235 488,255 445,285"/>
<polygon points="695,108 745,130 748,140 705,145"/>
<polyline points="803,68 835,65 845,75 850,108 825,90 803,80 803,68"/>
<polygon points="865,108 925,112 935,150 900,135 870,130"/>
<polyline points="955,150 1000,165 1000,178"/><polyline points="650,175 655,195"/><polyline points="1115,255 1117,280"/>
</g>
<g transform="translate(400 370) scale(.3333)" stroke-width="4">
<polyline points="680,210 640,205 580,200 535,185 480,180 400,130 310,100 200,115 125,150 105,150 85,200 100,230 170,235 240,240 290,275 355,320 335,345 345,380 320,405 345,440 355,455 320,470 345,510 400,580 440,610 490,640 480,690 395,685 370,700 340,740 200,730 100,705 20,705 0,695"/>
<polyline points="260,50 310,45 380,85 340,75 260,50"/>
<polygon points="150,520 180,520 240,540 300,575 318,610 315,628 250,600 170,565 150,540"/>
<polyline points="0,830 60,820 120,825 240,850 310,860 340,840 460,825 570,825 630,860 680,900"/>
<polygon points="640,205 665,205 665,225 640,220"/>
</g>
<g transform="translate(230 530) scale(.3333)" stroke-width="4">
<polyline points="245,235 260,180 350,160 430,195 520,210"/>
<polyline points="245,235 240,270 290,320 325,315 385,350 445,432 480,425 470,380 520,345 560,340 610,335 640,345"/>
<polygon points="512,398 555,408 550,418 515,412"/>
<polyline points="478,180 505,180 510,190 490,195 478,180"/>
<polyline points="1230,465 1240,540 1290,555 1312,610"/>
<polygon points="1100,170 1135,240 1115,235 1090,195"/>
<polyline points="1180,225 1210,240 1285,265"/>
</g>
<g stroke="#3a3a3a">
<g transform="translate(400 370) scale(.3333)" stroke-width="4.5">
<polyline points="680,180 720,130 750,118 800,120 870,150 960,120 1010,120 1100,180 1130,180 1200,225"/>
<polyline points="925,900 920,820 960,800 985,780 1050,745 1090,745 1110,830 1200,825"/>
</g>
<g transform="translate(780 400) scale(.3333)" stroke-width="4.5">
<polyline points="0,80 40,120 100,150 150,125 190,130 205,160 215,220 250,290 320,275 400,285 440,260 465,288 430,340 295,320 300,375 360,375 400,400 470,400 540,400 610,425 680,510 755,575 730,640 700,690 650,680 640,745 600,750 620,785 665,775 595,755 540,670 450,655 400,650 330,660 290,655 250,640 200,635 160,660 105,735 0,745"/>
</g>
<g transform="translate(640 640) scale(.3333)" stroke-width="4.5">
<polyline points="85,280 120,190 205,80 210,40 195,0"/>
<polyline points="0,210 50,215 65,250 85,280"/>
</g>
</g>
<g transform="translate(780 400) scale(.3333)" stroke-width="4"><polygon points="500,640 520,640 530,650 525,660 505,655"/><polygon points="510,680 518,682 515,692 508,688"/></g>
<polygon points="1080,662 1087,663 1085,669 1077,668" stroke-width="1.4"/>
</g>

<!-- axes labels -->
<g fill="#a6a6a6" font-size="15">
<text x="5" y="121" textLength="22" lengthAdjust="spacingAndGlyphs">22N</text>
<text x="1" y="192" textLength="25" lengthAdjust="spacingAndGlyphs">1.5N</text>
<text x="5" y="262" textLength="22" lengthAdjust="spacingAndGlyphs">21N</text>
<text x="1" y="333" textLength="25" lengthAdjust="spacingAndGlyphs">0.5N</text>
<text x="5" y="403" textLength="22" lengthAdjust="spacingAndGlyphs">20N</text>
<text x="1" y="473" textLength="25" lengthAdjust="spacingAndGlyphs">9.5N</text>
<text x="5" y="544" textLength="22" lengthAdjust="spacingAndGlyphs">19N</text>
<text x="1" y="614" textLength="25" lengthAdjust="spacingAndGlyphs">8.5N</text>
<text x="5" y="684" textLength="22" lengthAdjust="spacingAndGlyphs">18N</text>
<text x="1" y="755" textLength="25" lengthAdjust="spacingAndGlyphs">7.5N</text>
<text x="5" y="825" textLength="22" lengthAdjust="spacingAndGlyphs">17N</text>
<text x="1" y="895" textLength="25" lengthAdjust="spacingAndGlyphs">6.5N</text>
<text x="120" y="918" textLength="22" lengthAdjust="spacingAndGlyphs">76W</text>
<text x="238" y="918" textLength="22" lengthAdjust="spacingAndGlyphs">75W</text>
<text x="355" y="918" textLength="22" lengthAdjust="spacingAndGlyphs">74W</text>
<text x="472" y="918" textLength="22" lengthAdjust="spacingAndGlyphs">73W</text>
<text x="590" y="918" textLength="22" lengthAdjust="spacingAndGlyphs">72W</text>
<text x="707" y="918" textLength="22" lengthAdjust="spacingAndGlyphs">71W</text>
<text x="824" y="918" textLength="22" lengthAdjust="spacingAndGlyphs">70W</text>
<text x="941" y="918" textLength="22" lengthAdjust="spacingAndGlyphs">69W</text>
<text x="1058" y="918" textLength="22" lengthAdjust="spacingAndGlyphs">68W</text>
</g>

<!-- titles -->
<text class="dv" x="300" y="34" font-size="31" fill="#111" stroke="#fff" stroke-width=".9" textLength="622" lengthAdjust="spacing">Inhibicion Convectiva (J/kg, somb.)</text>
<g font-size="16" fill="#2f3dff">
<text class="dv" x="58" y="61" textLength="136" lengthAdjust="spacing" stroke="#fff" stroke-width=".3">13–Ene–2026</text>
<text class="dv" x="290" y="61" textLength="325" lengthAdjust="spacing" stroke="#fff" stroke-width=".3">0500 UTC / 1:00 am Hora Local</text>
<text class="dv" x="740" y="61" textLength="375" lengthAdjust="spacing" stroke="#fff" stroke-width=".3" xml:space="preserve">Valor Min. = –0.1  Valor Max. = 73.8575</text>
</g>
<text class="dv" x="45" y="83" font-size="15" fill="#1a90ff" stroke="#fff" stroke-width=".25" textLength="1101" lengthAdjust="spacing" xml:space="preserve">Pronóstico con el Modelo Atmósferico WRF inicializado a las 0000UTC_12ENE2026 y válido hasta las  0000UTC_14ENE2026</text>

<!-- colorbar labels -->
<text font-size="13" fill="#222">
<tspan x="1166" y="114">322</tspan><tspan x="1166" dy="10.06">316</tspan><tspan x="1166" dy="10.06">310</tspan><tspan x="1166" dy="10.06">304</tspan><tspan x="1166" dy="10.06">298</tspan><tspan x="1166" dy="10.06">292</tspan><tspan x="1166" dy="10.06">286</tspan><tspan x="1166" dy="10.06">280</tspan><tspan x="1166" dy="10.06">274</tspan><tspan x="1166" dy="10.06">268</tspan><tspan x="1166" dy="10.06">262</tspan><tspan x="1166" dy="10.06">256</tspan><tspan x="1166" dy="10.06">250</tspan><tspan x="1166" dy="10.06">244</tspan><tspan x="1166" dy="10.06">238</tspan><tspan x="1166" dy="10.06">232</tspan><tspan x="1166" dy="10.06">226</tspan><tspan x="1166" dy="10.06">220</tspan><tspan x="1166" dy="10.06">214</tspan><tspan x="1166" dy="10.06">208</tspan><tspan x="1166" dy="10.06">202</tspan><tspan x="1166" dy="10.06">196</tspan><tspan x="1166" dy="10.06">190</tspan><tspan x="1166" dy="10.06">184</tspan><tspan x="1166" dy="10.06">178</tspan><tspan x="1166" dy="10.06">172</tspan><tspan x="1166" dy="10.06">166</tspan><tspan x="1166" dy="10.06">160</tspan><tspan x="1166" dy="10.06">154</tspan><tspan x="1166" dy="10.06">148</tspan><tspan x="1166" dy="10.06">142</tspan><tspan x="1166" dy="10.06">136</tspan><tspan x="1166" dy="10.06">130</tspan><tspan x="1166" dy="10.06">124</tspan><tspan x="1166" dy="10.06">118</tspan><tspan x="1166" dy="10.06">112</tspan><tspan x="1166" dy="10.06">106</tspan><tspan x="1166" dy="10.06">100</tspan><tspan x="1166" dy="10.06">90</tspan><tspan x="1166" dy="10.06">87</tspan><tspan x="1166" dy="10.06">84</tspan><tspan x="1166" dy="10.06">81</tspan><tspan x="1166" dy="10.06">78</tspan><tspan x="1166" dy="10.06">75</tspan><tspan x="1166" dy="10.06">72</tspan><tspan x="1166" dy="10.06">69</tspan><tspan x="1166" dy="10.06">66</tspan><tspan x="1166" dy="10.06">63</tspan><tspan x="1166" dy="10.06">60</tspan><tspan x="1166" dy="10.06">58</tspan><tspan x="1166" dy="10.06">56</tspan><tspan x="1166" dy="10.06">54</tspan><tspan x="1166" dy="10.06">52</tspan><tspan x="1166" dy="10.06">50</tspan><tspan x="1166" dy="10.06">48</tspan><tspan x="1166" dy="10.06">46</tspan><tspan x="1166" dy="10.06">44</tspan><tspan x="1166" dy="10.06">42</tspan><tspan x="1166" dy="10.06">40</tspan><tspan x="1166" dy="10.06">38</tspan><tspan x="1166" dy="10.06">36</tspan><tspan x="1166" dy="10.06">34</tspan><tspan x="1166" dy="10.06">32</tspan><tspan x="1166" dy="10.06">30</tspan><tspan x="1166" dy="10.06">28</tspan><tspan x="1166" dy="10.06">26</tspan><tspan x="1166" dy="10.06">24</tspan><tspan x="1166" dy="10.06">22</tspan><tspan x="1166" dy="10.06">20</tspan><tspan x="1166" dy="10.06">18</tspan><tspan x="1166" dy="10.06">16</tspan><tspan x="1166" dy="10.06">14</tspan><tspan x="1166" dy="10.06">12</tspan><tspan x="1166" dy="10.06">10</tspan><tspan x="1166" dy="10.06">8</tspan><tspan x="1166" dy="10.06">6</tspan><tspan x="1166" dy="10.06">4</tspan><tspan x="1166" dy="10.06">2</tspan><tspan x="1166" dy="10.06">0</tspan>
</text>

<!-- legend -->
<rect x="916" y="877.5" width="208" height="21" fill="#fff" stroke="#bdbdbd" stroke-width="1.3"/>
<text x="931" y="894" font-size="15.5" fill="#1a90ff">Sis</text>
<text class="dv" x="953" y="894" font-size="18" fill="#2f3dff" textLength="15" lengthAdjust="spacingAndGlyphs">π</text>
<text x="974" y="894" font-size="15" fill="#555">–</text>
<text x="993" y="894" font-size="15" fill="#555" textLength="125" lengthAdjust="spacingAndGlyphs">ONAMET/REP.DOM.</text>
</svg>

<div id="cb"><div>
<i style="background:#000a82"></i><i style="background:#00108a"></i><i style="background:#001590"></i><i style="background:#001c96"></i><i style="background:#00229c"></i><i style="background:#0028a4"></i><i style="background:#002eaa"></i><i style="background:#0034b2"></i><i style="background:#003ab8"></i><i style="background:#0040c0"></i><i style="background:#0048c8"></i><i style="background:#0050d0"></i><i style="background:#0058d8"></i><i style="background:#0060e0"></i><i style="background:#0068e8"></i><i style="background:#0070f0"></i><i style="background:#0078f8"></i><i style="background:#0580ff"></i><i style="background:#0c86ff"></i><i style="background:#1088f5"></i><i style="background:#1590ee"></i><i style="background:#1a94ea"></i><i style="background:#2098e8"></i><i style="background:#259ce8"></i><i style="background:#2aa0e4"></i><i style="background:#30a8e0"></i><i style="background:#38aee0"></i><i style="background:#40b4dc"></i><i style="background:#48bcd8"></i><i style="background:#50c4d8"></i><i style="background:#58ccd8"></i><i style="background:#60d4d4"></i><i style="background:#68dcd4"></i><i style="background:#70e4d4"></i><i style="background:#78eccf"></i><i style="background:#7ef4cf"></i><i style="background:#80f8d0"></i><i style="background:#80fcd0"></i>
<i style="background:#ccffaa"></i><i style="background:#ccf5a0"></i><i style="background:#cfe890"></i><i style="background:#d2dc88"></i><i style="background:#d4d480"></i><i style="background:#d8cc78"></i><i style="background:#dcc470"></i><i style="background:#dcbc68"></i><i style="background:#dfb460"></i><i style="background:#dfac58"></i><i style="background:#e0a450"></i><i style="background:#e29c4c"></i><i style="background:#e49848"></i><i style="background:#e89040"></i><i style="background:#ec8838"></i><i style="background:#f08030"></i><i style="background:#f27828"></i><i style="background:#f56e20"></i><i style="background:#f86818"></i><i style="background:#fb6010"></i><i style="background:#ff5800"></i><i style="background:#f85408"></i><i style="background:#f05008"></i><i style="background:#e84e0c"></i><i style="background:#e04c0c"></i><i style="background:#d8480e"></i><i style="background:#d04510"></i><i style="background:#ca4212"></i><i style="background:#c44014"></i><i style="background:#be3e18"></i><i style="background:#b83c1a"></i><i style="background:#b23a1c"></i><i style="background:#ac3820"></i><i style="background:#a63622"></i><i style="background:#a23424"></i><i style="background:#9e3226"></i><i style="background:#983028"></i><i style="background:#942e2a"></i><i style="background:#902e2c"></i><i style="background:#8a2c2c"></i>
</div></div>
</body></html>
